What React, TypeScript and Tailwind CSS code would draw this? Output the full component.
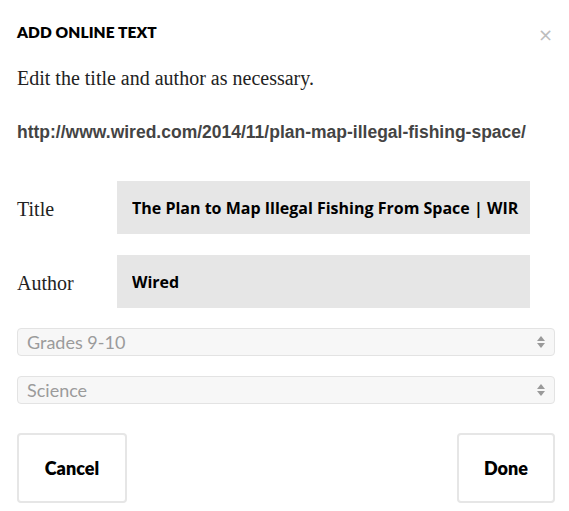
import React from "react";

function Arrows() {
  return (
    <svg width="8" height="12" viewBox="0 0 8 12" className="shrink-0">
      <path d="M4 0 L8 5 L0 5 Z" fill="#9a9a9a" />
      <path d="M4 12 L8 7 L0 7 Z" fill="#9a9a9a" />
    </svg>
  );
}

function SelectBox({ value }: { value: string }) {
  return (
    <div className="h-[28px] flex items-center justify-between rounded-[4px] border border-[#e3e3e3] bg-[#f7f7f7] pl-[9px] pr-[9px]">
      <span className="text-[18px] leading-none text-[#9b9b9b] font-['Lato',sans-serif]">{value}</span>
      <Arrows />
    </div>
  );
}

function Field({ label, value }: { label: string; value: string }) {
  return (
    <div className="flex items-center">
      <label className="w-[100px] shrink-0 text-[20px] text-[#222] font-['Liberation_Serif',serif] pt-[3px]">{label}</label>
      <input
        readOnly
        value={value}
        className="w-[413px] h-[53px] bg-[#e6e6e6] pl-[15px] pr-[11px] text-[16px] font-bold text-black font-['Open_Sans',sans-serif] outline-none"
      />
    </div>
  );
}

export default function App() {
  return (
    <div className="w-[569px] h-[511px] bg-white pl-[17px] pr-[14px] pt-[22px] relative">
      <div className="flex items-start justify-between">
        <h1 className="text-[15.5px] leading-[20px] font-extrabold tracking-[0.1px] text-black font-['Lato',sans-serif]">ADD ONLINE TEXT</h1>
        <button className="text-[#bdbdbd] text-[18px] leading-none mr-[2px] mt-[4px] font-['DejaVu_Sans',sans-serif]">×</button>
      </div>

      <p className="mt-[21px] text-[20px] leading-[26px] text-[#222] font-['Liberation_Serif',serif]">
        Edit the title and author as necessary.
      </p>

      <p className="mt-[30px] text-[17.5px] leading-[22px] font-bold text-[#444] font-['Liberation_Sans',sans-serif]">
        http://www.wired.com/2014/11/plan-map-illegal-fishing-space/
      </p>

      <div className="mt-[38px] flex flex-col gap-[21px]">
        <Field label="Title" value="The Plan to Map Illegal Fishing From Space | WIRED" />
        <Field label="Author" value="Wired" />
      </div>

      <div className="mt-[20px] flex flex-col gap-[20px]">
        <SelectBox value="Grades 9-10" />
        <SelectBox value="Science" />
      </div>

      <div className="mt-[29px] flex justify-between">
        <button className="w-[110px] h-[70px] rounded-[4px] border-2 border-[#e6e6e6] bg-white text-[18px] font-extrabold text-black font-['Lato',sans-serif]">
          Cancel
        </button>
        <button className="w-[98px] h-[70px] rounded-[4px] border-2 border-[#e6e6e6] bg-white text-[18px] font-extrabold text-black font-['Lato',sans-serif]">
          Done
        </button>
      </div>
    </div>
  );
}
